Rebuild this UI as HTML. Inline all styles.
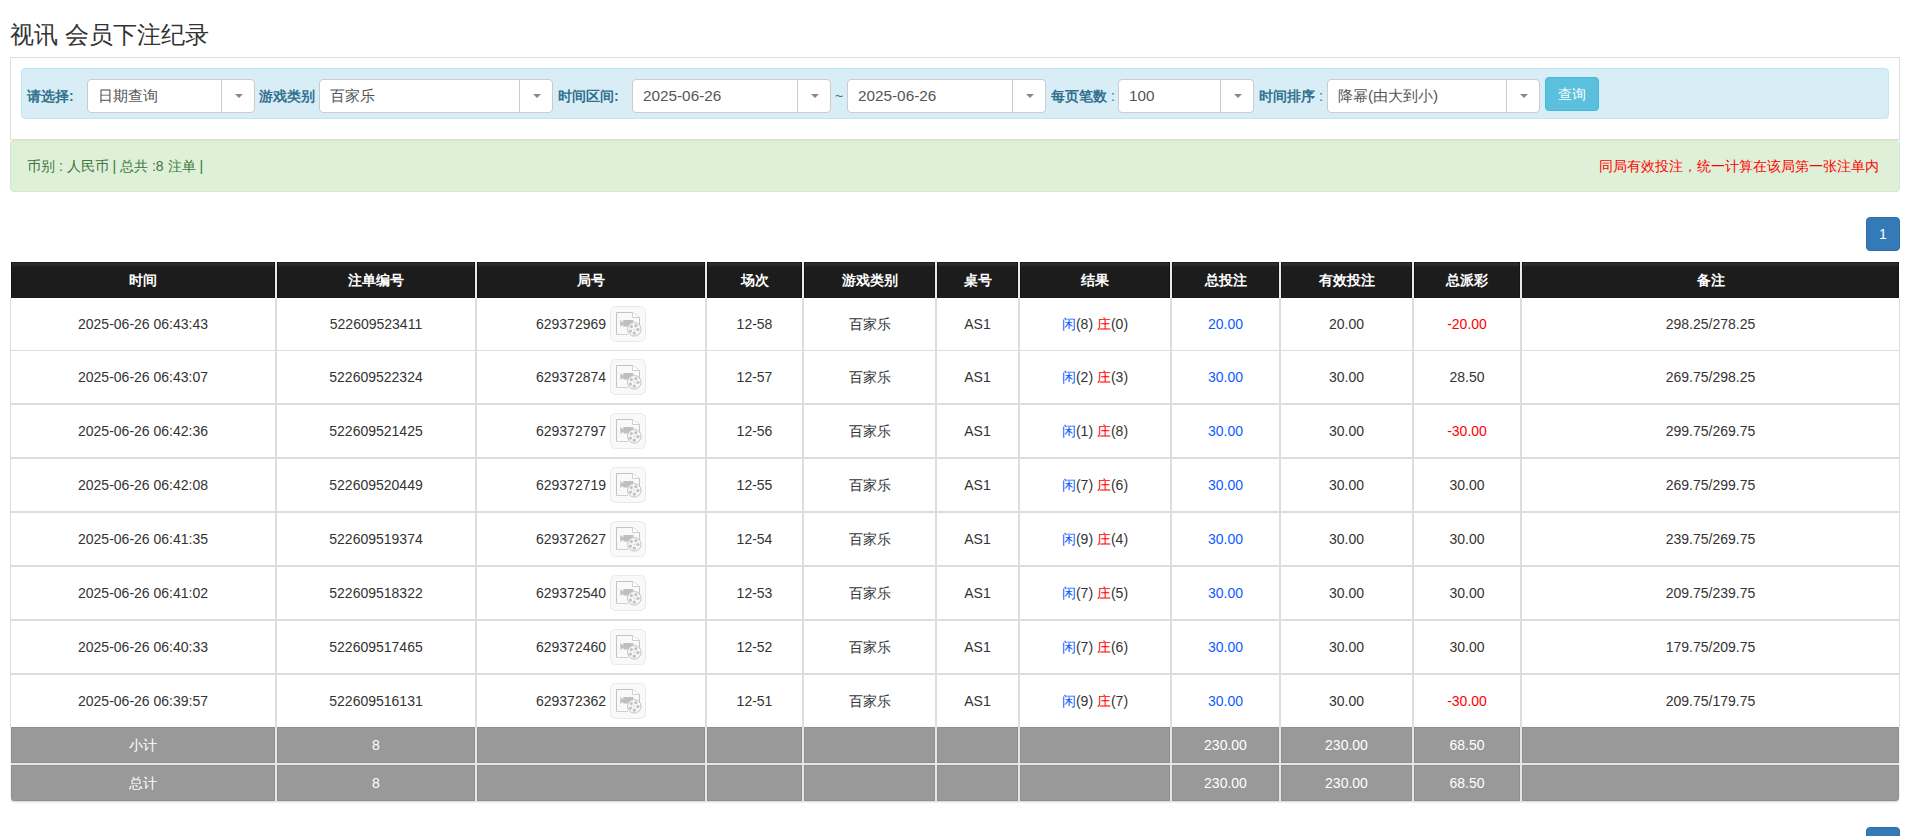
<!DOCTYPE html><html><head><meta charset="utf-8"><style>
*{box-sizing:border-box;margin:0;padding:0}
html,body{width:1910px;height:836px;overflow:hidden;background:#fff}
body{position:relative;font-family:"Liberation Sans", sans-serif;font-size:14px;color:#333;line-height:20px}
.a{position:absolute}
.title{left:10px;top:20px;font-size:24px;line-height:30px;color:#333;white-space:nowrap}
.panel{left:10px;top:57px;width:1890px;height:83px;border:1px solid #ddd}
.info{left:21px;top:68px;width:1868px;height:51px;background:#d9edf7;border:1px solid #bce8f1;border-radius:4px}
.lbl{top:86px;font-weight:bold;color:#31708f;white-space:nowrap;line-height:20px}
.sel{top:79px;height:34px;background:#fff;border:1px solid #ccc;border-radius:4px}
.sel .t{position:absolute;left:10px;top:6px;color:#555;white-space:nowrap;line-height:20px;font-size:15.3px}
.sel .d{position:absolute;right:32px;top:0;width:1px;height:32px;background:#ccc}
.sel .ar{position:absolute;right:11px;top:14px;width:0;height:0;border-left:4px solid transparent;border-right:4px solid transparent;border-top:4px solid #888}
.btn{left:1545px;top:77px;width:54px;height:34px;background:#5bc0de;border:1px solid #46b8da;border-radius:4px;color:#fff;text-align:center;line-height:32px}
.ok{left:10px;top:140px;width:1890px;height:52px;background:#dff0d8;border:1px solid #d6e9c6;border-radius:4px}
.okl{left:27px;top:156px;color:#3c763d;white-space:nowrap}
.okr{right:31px;top:156px;color:#f00;white-space:nowrap}
.pg{left:1866px;width:34px;height:34px;background:#337ab7;border:1px solid #2e6da4;border-radius:4px;color:#fff;text-align:center;line-height:32px;font-size:14px}
.c{position:absolute;display:flex;align-items:center;justify-content:center;white-space:nowrap}
.hd{background:linear-gradient(#1e1e1e 0,#1e1e1e 1px,#2c2c2c 1px,#2c2c2c 3px,#1c1c1c 5px,#1c1c1c 100%);color:#fff;font-weight:bold}
.ft{background:#999;color:#fff}
.b{color:#0d5bff} .r{color:#f00}
.ic{display:inline-block;width:36px;height:36px;margin-left:4px;vertical-align:middle} .n1{position:relative;top:1px}
</style></head><body>
<div class="a title">视讯 会员下注纪录</div>
<div class="a panel"></div>
<div class="a info"></div>
<div class="a lbl" style="left:27px">请选择:</div>
<div class="a lbl" style="left:259px">游戏类别</div>
<div class="a lbl" style="left:558px">时间区间:</div>
<div class="a lbl" style="left:1051px">每页笔数<span style="font-weight:normal"> :</span></div>
<div class="a lbl" style="left:1259px">时间排序<span style="font-weight:normal"> :</span></div>
<div class="a lbl" style="left:835px;font-weight:normal">~</div>
<div class="a sel" style="left:87px;width:168px"><span class="t">日期查询</span><span class="d"></span><span class="ar"></span></div>
<div class="a sel" style="left:319px;width:234px"><span class="t">百家乐</span><span class="d"></span><span class="ar"></span></div>
<div class="a sel" style="left:632px;width:199px"><span class="t">2025-06-26</span><span class="d"></span><span class="ar"></span></div>
<div class="a sel" style="left:847px;width:199px"><span class="t">2025-06-26</span><span class="d"></span><span class="ar"></span></div>
<div class="a sel" style="left:1118px;width:136px"><span class="t">100</span><span class="d"></span><span class="ar"></span></div>
<div class="a sel" style="left:1327px;width:213px"><span class="t">降幂(由大到小)</span><span class="d"></span><span class="ar"></span></div>
<div class="a btn">查询</div>
<div class="a ok"></div>
<div class="a okl">币别 : 人民币 | 总共 :8 注单 |</div>
<div class="a okr">同局有效投注，统一计算在该局第一张注单内</div>
<div class="a pg" style="top:217px">1</div>
<div class="a pg" style="top:827px">1</div>
<div class="a" style="left:10px;top:298px;width:1px;height:429px;background:#ddd"></div>
<div class="a" style="left:1899px;top:298px;width:1px;height:429px;background:#ddd"></div>
<div class="a" style="left:275px;top:298px;width:2px;height:429px;background:#ddd"></div>
<div class="a" style="left:475px;top:298px;width:2px;height:429px;background:#ddd"></div>
<div class="a" style="left:705px;top:298px;width:2px;height:429px;background:#ddd"></div>
<div class="a" style="left:802px;top:298px;width:2px;height:429px;background:#ddd"></div>
<div class="a" style="left:935px;top:298px;width:2px;height:429px;background:#ddd"></div>
<div class="a" style="left:1018px;top:298px;width:2px;height:429px;background:#ddd"></div>
<div class="a" style="left:1170px;top:298px;width:2px;height:429px;background:#ddd"></div>
<div class="a" style="left:1279px;top:298px;width:2px;height:429px;background:#ddd"></div>
<div class="a" style="left:1412px;top:298px;width:2px;height:429px;background:#ddd"></div>
<div class="a" style="left:1520px;top:298px;width:2px;height:429px;background:#ddd"></div>
<div class="a" style="left:10px;top:350px;width:1890px;height:1px;background:#ddd"></div>
<div class="a" style="left:10px;top:403px;width:1890px;height:2px;background:#ddd"></div>
<div class="a" style="left:10px;top:457px;width:1890px;height:2px;background:#ddd"></div>
<div class="a" style="left:10px;top:511px;width:1890px;height:2px;background:#ddd"></div>
<div class="a" style="left:10px;top:565px;width:1890px;height:2px;background:#ddd"></div>
<div class="a" style="left:10px;top:619px;width:1890px;height:2px;background:#ddd"></div>
<div class="a" style="left:10px;top:673px;width:1890px;height:2px;background:#ddd"></div>
<div class="a hd" style="left:11px;top:262px;width:1888px;height:36px;border-left:1px solid #141414;border-right:1px solid #141414"></div>
<div class="a" style="left:274px;top:262px;width:4px;height:36px;background:#141414;border-left:1px solid #141414;border-right:1px solid #141414"></div>
<div class="a" style="left:275px;top:262px;width:2px;height:36px;background:#eaeaea"></div>
<div class="a" style="left:474px;top:262px;width:4px;height:36px;background:#141414;border-left:1px solid #141414;border-right:1px solid #141414"></div>
<div class="a" style="left:475px;top:262px;width:2px;height:36px;background:#eaeaea"></div>
<div class="a" style="left:704px;top:262px;width:4px;height:36px;background:#141414;border-left:1px solid #141414;border-right:1px solid #141414"></div>
<div class="a" style="left:705px;top:262px;width:2px;height:36px;background:#eaeaea"></div>
<div class="a" style="left:801px;top:262px;width:4px;height:36px;background:#141414;border-left:1px solid #141414;border-right:1px solid #141414"></div>
<div class="a" style="left:802px;top:262px;width:2px;height:36px;background:#eaeaea"></div>
<div class="a" style="left:934px;top:262px;width:4px;height:36px;background:#141414;border-left:1px solid #141414;border-right:1px solid #141414"></div>
<div class="a" style="left:935px;top:262px;width:2px;height:36px;background:#eaeaea"></div>
<div class="a" style="left:1017px;top:262px;width:4px;height:36px;background:#141414;border-left:1px solid #141414;border-right:1px solid #141414"></div>
<div class="a" style="left:1018px;top:262px;width:2px;height:36px;background:#eaeaea"></div>
<div class="a" style="left:1169px;top:262px;width:4px;height:36px;background:#141414;border-left:1px solid #141414;border-right:1px solid #141414"></div>
<div class="a" style="left:1170px;top:262px;width:2px;height:36px;background:#eaeaea"></div>
<div class="a" style="left:1278px;top:262px;width:4px;height:36px;background:#141414;border-left:1px solid #141414;border-right:1px solid #141414"></div>
<div class="a" style="left:1279px;top:262px;width:2px;height:36px;background:#eaeaea"></div>
<div class="a" style="left:1411px;top:262px;width:4px;height:36px;background:#141414;border-left:1px solid #141414;border-right:1px solid #141414"></div>
<div class="a" style="left:1412px;top:262px;width:2px;height:36px;background:#eaeaea"></div>
<div class="a" style="left:1519px;top:262px;width:4px;height:36px;background:#141414;border-left:1px solid #141414;border-right:1px solid #141414"></div>
<div class="a" style="left:1520px;top:262px;width:2px;height:36px;background:#eaeaea"></div>
<div class="c" style="left:11px;top:262px;width:264px;height:36px;color:#fff;font-weight:bold">时间</div>
<div class="c" style="left:277px;top:262px;width:198px;height:36px;color:#fff;font-weight:bold">注单编号</div>
<div class="c" style="left:477px;top:262px;width:228px;height:36px;color:#fff;font-weight:bold">局号</div>
<div class="c" style="left:707px;top:262px;width:95px;height:36px;color:#fff;font-weight:bold">场次</div>
<div class="c" style="left:804px;top:262px;width:131px;height:36px;color:#fff;font-weight:bold">游戏类别</div>
<div class="c" style="left:937px;top:262px;width:81px;height:36px;color:#fff;font-weight:bold">桌号</div>
<div class="c" style="left:1020px;top:262px;width:150px;height:36px;color:#fff;font-weight:bold">结果</div>
<div class="c" style="left:1172px;top:262px;width:107px;height:36px;color:#fff;font-weight:bold">总投注</div>
<div class="c" style="left:1281px;top:262px;width:131px;height:36px;color:#fff;font-weight:bold">有效投注</div>
<div class="c" style="left:1414px;top:262px;width:106px;height:36px;color:#fff;font-weight:bold">总派彩</div>
<div class="c" style="left:1522px;top:262px;width:377px;height:36px;color:#fff;font-weight:bold">备注</div>
<div class="c" style="left:11px;top:298px;width:264px;height:52px"><span>2025-06-26 06:43:43</span></div>
<div class="c" style="left:277px;top:298px;width:198px;height:52px"><span>522609523411</span></div>
<div class="c" style="left:477px;top:298px;width:228px;height:52px"><span><span class="n1">629372969</span><svg class="ic" viewBox="-1 0 36 36"><rect x="-0.5" y="0.5" width="35" height="35" rx="5" fill="#f9f9f9" stroke="#e9e9e9"/><path d="M5.5 28.5V6.5H21.5L28.5 11.5V22" fill="none" stroke="#c4c4c4"/><path d="M5.5 28.5H17" fill="none" stroke="#cfcfcf"/><path d="M21.5 6.5V11.5H28.5" fill="#fff" stroke="#cfcfcf"/><path d="M9.3 14 L12.3 16.5 V14 H22.3 V20.6 H12.3 V18.5 L9.3 21 Z" fill="#bfbfbf"/><circle cx="23.3" cy="23.3" r="6.8" fill="#f7f7f7" stroke="#c4c4c4"/><circle cx="20.4" cy="20.6" r="1.6" fill="#c2c2c2"/><circle cx="24.8" cy="19.7" r="1.6" fill="#c2c2c2"/><circle cx="26.9" cy="23.6" r="1.6" fill="#c2c2c2"/><circle cx="23.3" cy="27.2" r="1.6" fill="#c2c2c2"/><circle cx="19.4" cy="25.1" r="1.6" fill="#c2c2c2"/><circle cx="23.3" cy="23.5" r="0.7" fill="#c8c8c8"/></svg></span></div>
<div class="c" style="left:707px;top:298px;width:95px;height:52px"><span>12-58</span></div>
<div class="c" style="left:804px;top:298px;width:131px;height:52px"><span>百家乐</span></div>
<div class="c" style="left:937px;top:298px;width:81px;height:52px"><span>AS1</span></div>
<div class="c" style="left:1020px;top:298px;width:150px;height:52px"><span><span class="b">闲</span>(8) <span class="r">庄</span>(0)</span></div>
<div class="c" style="left:1172px;top:298px;width:107px;height:52px"><span><span class="b">20.00</span></span></div>
<div class="c" style="left:1281px;top:298px;width:131px;height:52px"><span>20.00</span></div>
<div class="c" style="left:1414px;top:298px;width:106px;height:52px"><span><span class="r">-20.00</span></span></div>
<div class="c" style="left:1522px;top:298px;width:377px;height:52px"><span>298.25/278.25</span></div>
<div class="c" style="left:11px;top:351px;width:264px;height:52px"><span>2025-06-26 06:43:07</span></div>
<div class="c" style="left:277px;top:351px;width:198px;height:52px"><span>522609522324</span></div>
<div class="c" style="left:477px;top:351px;width:228px;height:52px"><span><span class="n1">629372874</span><svg class="ic" viewBox="-1 0 36 36"><rect x="-0.5" y="0.5" width="35" height="35" rx="5" fill="#f9f9f9" stroke="#e9e9e9"/><path d="M5.5 28.5V6.5H21.5L28.5 11.5V22" fill="none" stroke="#c4c4c4"/><path d="M5.5 28.5H17" fill="none" stroke="#cfcfcf"/><path d="M21.5 6.5V11.5H28.5" fill="#fff" stroke="#cfcfcf"/><path d="M9.3 14 L12.3 16.5 V14 H22.3 V20.6 H12.3 V18.5 L9.3 21 Z" fill="#bfbfbf"/><circle cx="23.3" cy="23.3" r="6.8" fill="#f7f7f7" stroke="#c4c4c4"/><circle cx="20.4" cy="20.6" r="1.6" fill="#c2c2c2"/><circle cx="24.8" cy="19.7" r="1.6" fill="#c2c2c2"/><circle cx="26.9" cy="23.6" r="1.6" fill="#c2c2c2"/><circle cx="23.3" cy="27.2" r="1.6" fill="#c2c2c2"/><circle cx="19.4" cy="25.1" r="1.6" fill="#c2c2c2"/><circle cx="23.3" cy="23.5" r="0.7" fill="#c8c8c8"/></svg></span></div>
<div class="c" style="left:707px;top:351px;width:95px;height:52px"><span>12-57</span></div>
<div class="c" style="left:804px;top:351px;width:131px;height:52px"><span>百家乐</span></div>
<div class="c" style="left:937px;top:351px;width:81px;height:52px"><span>AS1</span></div>
<div class="c" style="left:1020px;top:351px;width:150px;height:52px"><span><span class="b">闲</span>(2) <span class="r">庄</span>(3)</span></div>
<div class="c" style="left:1172px;top:351px;width:107px;height:52px"><span><span class="b">30.00</span></span></div>
<div class="c" style="left:1281px;top:351px;width:131px;height:52px"><span>30.00</span></div>
<div class="c" style="left:1414px;top:351px;width:106px;height:52px"><span>28.50</span></div>
<div class="c" style="left:1522px;top:351px;width:377px;height:52px"><span>269.75/298.25</span></div>
<div class="c" style="left:11px;top:405px;width:264px;height:52px"><span>2025-06-26 06:42:36</span></div>
<div class="c" style="left:277px;top:405px;width:198px;height:52px"><span>522609521425</span></div>
<div class="c" style="left:477px;top:405px;width:228px;height:52px"><span><span class="n1">629372797</span><svg class="ic" viewBox="-1 0 36 36"><rect x="-0.5" y="0.5" width="35" height="35" rx="5" fill="#f9f9f9" stroke="#e9e9e9"/><path d="M5.5 28.5V6.5H21.5L28.5 11.5V22" fill="none" stroke="#c4c4c4"/><path d="M5.5 28.5H17" fill="none" stroke="#cfcfcf"/><path d="M21.5 6.5V11.5H28.5" fill="#fff" stroke="#cfcfcf"/><path d="M9.3 14 L12.3 16.5 V14 H22.3 V20.6 H12.3 V18.5 L9.3 21 Z" fill="#bfbfbf"/><circle cx="23.3" cy="23.3" r="6.8" fill="#f7f7f7" stroke="#c4c4c4"/><circle cx="20.4" cy="20.6" r="1.6" fill="#c2c2c2"/><circle cx="24.8" cy="19.7" r="1.6" fill="#c2c2c2"/><circle cx="26.9" cy="23.6" r="1.6" fill="#c2c2c2"/><circle cx="23.3" cy="27.2" r="1.6" fill="#c2c2c2"/><circle cx="19.4" cy="25.1" r="1.6" fill="#c2c2c2"/><circle cx="23.3" cy="23.5" r="0.7" fill="#c8c8c8"/></svg></span></div>
<div class="c" style="left:707px;top:405px;width:95px;height:52px"><span>12-56</span></div>
<div class="c" style="left:804px;top:405px;width:131px;height:52px"><span>百家乐</span></div>
<div class="c" style="left:937px;top:405px;width:81px;height:52px"><span>AS1</span></div>
<div class="c" style="left:1020px;top:405px;width:150px;height:52px"><span><span class="b">闲</span>(1) <span class="r">庄</span>(8)</span></div>
<div class="c" style="left:1172px;top:405px;width:107px;height:52px"><span><span class="b">30.00</span></span></div>
<div class="c" style="left:1281px;top:405px;width:131px;height:52px"><span>30.00</span></div>
<div class="c" style="left:1414px;top:405px;width:106px;height:52px"><span><span class="r">-30.00</span></span></div>
<div class="c" style="left:1522px;top:405px;width:377px;height:52px"><span>299.75/269.75</span></div>
<div class="c" style="left:11px;top:459px;width:264px;height:52px"><span>2025-06-26 06:42:08</span></div>
<div class="c" style="left:277px;top:459px;width:198px;height:52px"><span>522609520449</span></div>
<div class="c" style="left:477px;top:459px;width:228px;height:52px"><span><span class="n1">629372719</span><svg class="ic" viewBox="-1 0 36 36"><rect x="-0.5" y="0.5" width="35" height="35" rx="5" fill="#f9f9f9" stroke="#e9e9e9"/><path d="M5.5 28.5V6.5H21.5L28.5 11.5V22" fill="none" stroke="#c4c4c4"/><path d="M5.5 28.5H17" fill="none" stroke="#cfcfcf"/><path d="M21.5 6.5V11.5H28.5" fill="#fff" stroke="#cfcfcf"/><path d="M9.3 14 L12.3 16.5 V14 H22.3 V20.6 H12.3 V18.5 L9.3 21 Z" fill="#bfbfbf"/><circle cx="23.3" cy="23.3" r="6.8" fill="#f7f7f7" stroke="#c4c4c4"/><circle cx="20.4" cy="20.6" r="1.6" fill="#c2c2c2"/><circle cx="24.8" cy="19.7" r="1.6" fill="#c2c2c2"/><circle cx="26.9" cy="23.6" r="1.6" fill="#c2c2c2"/><circle cx="23.3" cy="27.2" r="1.6" fill="#c2c2c2"/><circle cx="19.4" cy="25.1" r="1.6" fill="#c2c2c2"/><circle cx="23.3" cy="23.5" r="0.7" fill="#c8c8c8"/></svg></span></div>
<div class="c" style="left:707px;top:459px;width:95px;height:52px"><span>12-55</span></div>
<div class="c" style="left:804px;top:459px;width:131px;height:52px"><span>百家乐</span></div>
<div class="c" style="left:937px;top:459px;width:81px;height:52px"><span>AS1</span></div>
<div class="c" style="left:1020px;top:459px;width:150px;height:52px"><span><span class="b">闲</span>(7) <span class="r">庄</span>(6)</span></div>
<div class="c" style="left:1172px;top:459px;width:107px;height:52px"><span><span class="b">30.00</span></span></div>
<div class="c" style="left:1281px;top:459px;width:131px;height:52px"><span>30.00</span></div>
<div class="c" style="left:1414px;top:459px;width:106px;height:52px"><span>30.00</span></div>
<div class="c" style="left:1522px;top:459px;width:377px;height:52px"><span>269.75/299.75</span></div>
<div class="c" style="left:11px;top:513px;width:264px;height:52px"><span>2025-06-26 06:41:35</span></div>
<div class="c" style="left:277px;top:513px;width:198px;height:52px"><span>522609519374</span></div>
<div class="c" style="left:477px;top:513px;width:228px;height:52px"><span><span class="n1">629372627</span><svg class="ic" viewBox="-1 0 36 36"><rect x="-0.5" y="0.5" width="35" height="35" rx="5" fill="#f9f9f9" stroke="#e9e9e9"/><path d="M5.5 28.5V6.5H21.5L28.5 11.5V22" fill="none" stroke="#c4c4c4"/><path d="M5.5 28.5H17" fill="none" stroke="#cfcfcf"/><path d="M21.5 6.5V11.5H28.5" fill="#fff" stroke="#cfcfcf"/><path d="M9.3 14 L12.3 16.5 V14 H22.3 V20.6 H12.3 V18.5 L9.3 21 Z" fill="#bfbfbf"/><circle cx="23.3" cy="23.3" r="6.8" fill="#f7f7f7" stroke="#c4c4c4"/><circle cx="20.4" cy="20.6" r="1.6" fill="#c2c2c2"/><circle cx="24.8" cy="19.7" r="1.6" fill="#c2c2c2"/><circle cx="26.9" cy="23.6" r="1.6" fill="#c2c2c2"/><circle cx="23.3" cy="27.2" r="1.6" fill="#c2c2c2"/><circle cx="19.4" cy="25.1" r="1.6" fill="#c2c2c2"/><circle cx="23.3" cy="23.5" r="0.7" fill="#c8c8c8"/></svg></span></div>
<div class="c" style="left:707px;top:513px;width:95px;height:52px"><span>12-54</span></div>
<div class="c" style="left:804px;top:513px;width:131px;height:52px"><span>百家乐</span></div>
<div class="c" style="left:937px;top:513px;width:81px;height:52px"><span>AS1</span></div>
<div class="c" style="left:1020px;top:513px;width:150px;height:52px"><span><span class="b">闲</span>(9) <span class="r">庄</span>(4)</span></div>
<div class="c" style="left:1172px;top:513px;width:107px;height:52px"><span><span class="b">30.00</span></span></div>
<div class="c" style="left:1281px;top:513px;width:131px;height:52px"><span>30.00</span></div>
<div class="c" style="left:1414px;top:513px;width:106px;height:52px"><span>30.00</span></div>
<div class="c" style="left:1522px;top:513px;width:377px;height:52px"><span>239.75/269.75</span></div>
<div class="c" style="left:11px;top:567px;width:264px;height:52px"><span>2025-06-26 06:41:02</span></div>
<div class="c" style="left:277px;top:567px;width:198px;height:52px"><span>522609518322</span></div>
<div class="c" style="left:477px;top:567px;width:228px;height:52px"><span><span class="n1">629372540</span><svg class="ic" viewBox="-1 0 36 36"><rect x="-0.5" y="0.5" width="35" height="35" rx="5" fill="#f9f9f9" stroke="#e9e9e9"/><path d="M5.5 28.5V6.5H21.5L28.5 11.5V22" fill="none" stroke="#c4c4c4"/><path d="M5.5 28.5H17" fill="none" stroke="#cfcfcf"/><path d="M21.5 6.5V11.5H28.5" fill="#fff" stroke="#cfcfcf"/><path d="M9.3 14 L12.3 16.5 V14 H22.3 V20.6 H12.3 V18.5 L9.3 21 Z" fill="#bfbfbf"/><circle cx="23.3" cy="23.3" r="6.8" fill="#f7f7f7" stroke="#c4c4c4"/><circle cx="20.4" cy="20.6" r="1.6" fill="#c2c2c2"/><circle cx="24.8" cy="19.7" r="1.6" fill="#c2c2c2"/><circle cx="26.9" cy="23.6" r="1.6" fill="#c2c2c2"/><circle cx="23.3" cy="27.2" r="1.6" fill="#c2c2c2"/><circle cx="19.4" cy="25.1" r="1.6" fill="#c2c2c2"/><circle cx="23.3" cy="23.5" r="0.7" fill="#c8c8c8"/></svg></span></div>
<div class="c" style="left:707px;top:567px;width:95px;height:52px"><span>12-53</span></div>
<div class="c" style="left:804px;top:567px;width:131px;height:52px"><span>百家乐</span></div>
<div class="c" style="left:937px;top:567px;width:81px;height:52px"><span>AS1</span></div>
<div class="c" style="left:1020px;top:567px;width:150px;height:52px"><span><span class="b">闲</span>(7) <span class="r">庄</span>(5)</span></div>
<div class="c" style="left:1172px;top:567px;width:107px;height:52px"><span><span class="b">30.00</span></span></div>
<div class="c" style="left:1281px;top:567px;width:131px;height:52px"><span>30.00</span></div>
<div class="c" style="left:1414px;top:567px;width:106px;height:52px"><span>30.00</span></div>
<div class="c" style="left:1522px;top:567px;width:377px;height:52px"><span>209.75/239.75</span></div>
<div class="c" style="left:11px;top:621px;width:264px;height:52px"><span>2025-06-26 06:40:33</span></div>
<div class="c" style="left:277px;top:621px;width:198px;height:52px"><span>522609517465</span></div>
<div class="c" style="left:477px;top:621px;width:228px;height:52px"><span><span class="n1">629372460</span><svg class="ic" viewBox="-1 0 36 36"><rect x="-0.5" y="0.5" width="35" height="35" rx="5" fill="#f9f9f9" stroke="#e9e9e9"/><path d="M5.5 28.5V6.5H21.5L28.5 11.5V22" fill="none" stroke="#c4c4c4"/><path d="M5.5 28.5H17" fill="none" stroke="#cfcfcf"/><path d="M21.5 6.5V11.5H28.5" fill="#fff" stroke="#cfcfcf"/><path d="M9.3 14 L12.3 16.5 V14 H22.3 V20.6 H12.3 V18.5 L9.3 21 Z" fill="#bfbfbf"/><circle cx="23.3" cy="23.3" r="6.8" fill="#f7f7f7" stroke="#c4c4c4"/><circle cx="20.4" cy="20.6" r="1.6" fill="#c2c2c2"/><circle cx="24.8" cy="19.7" r="1.6" fill="#c2c2c2"/><circle cx="26.9" cy="23.6" r="1.6" fill="#c2c2c2"/><circle cx="23.3" cy="27.2" r="1.6" fill="#c2c2c2"/><circle cx="19.4" cy="25.1" r="1.6" fill="#c2c2c2"/><circle cx="23.3" cy="23.5" r="0.7" fill="#c8c8c8"/></svg></span></div>
<div class="c" style="left:707px;top:621px;width:95px;height:52px"><span>12-52</span></div>
<div class="c" style="left:804px;top:621px;width:131px;height:52px"><span>百家乐</span></div>
<div class="c" style="left:937px;top:621px;width:81px;height:52px"><span>AS1</span></div>
<div class="c" style="left:1020px;top:621px;width:150px;height:52px"><span><span class="b">闲</span>(7) <span class="r">庄</span>(6)</span></div>
<div class="c" style="left:1172px;top:621px;width:107px;height:52px"><span><span class="b">30.00</span></span></div>
<div class="c" style="left:1281px;top:621px;width:131px;height:52px"><span>30.00</span></div>
<div class="c" style="left:1414px;top:621px;width:106px;height:52px"><span>30.00</span></div>
<div class="c" style="left:1522px;top:621px;width:377px;height:52px"><span>179.75/209.75</span></div>
<div class="c" style="left:11px;top:675px;width:264px;height:52px"><span>2025-06-26 06:39:57</span></div>
<div class="c" style="left:277px;top:675px;width:198px;height:52px"><span>522609516131</span></div>
<div class="c" style="left:477px;top:675px;width:228px;height:52px"><span><span class="n1">629372362</span><svg class="ic" viewBox="-1 0 36 36"><rect x="-0.5" y="0.5" width="35" height="35" rx="5" fill="#f9f9f9" stroke="#e9e9e9"/><path d="M5.5 28.5V6.5H21.5L28.5 11.5V22" fill="none" stroke="#c4c4c4"/><path d="M5.5 28.5H17" fill="none" stroke="#cfcfcf"/><path d="M21.5 6.5V11.5H28.5" fill="#fff" stroke="#cfcfcf"/><path d="M9.3 14 L12.3 16.5 V14 H22.3 V20.6 H12.3 V18.5 L9.3 21 Z" fill="#bfbfbf"/><circle cx="23.3" cy="23.3" r="6.8" fill="#f7f7f7" stroke="#c4c4c4"/><circle cx="20.4" cy="20.6" r="1.6" fill="#c2c2c2"/><circle cx="24.8" cy="19.7" r="1.6" fill="#c2c2c2"/><circle cx="26.9" cy="23.6" r="1.6" fill="#c2c2c2"/><circle cx="23.3" cy="27.2" r="1.6" fill="#c2c2c2"/><circle cx="19.4" cy="25.1" r="1.6" fill="#c2c2c2"/><circle cx="23.3" cy="23.5" r="0.7" fill="#c8c8c8"/></svg></span></div>
<div class="c" style="left:707px;top:675px;width:95px;height:52px"><span>12-51</span></div>
<div class="c" style="left:804px;top:675px;width:131px;height:52px"><span>百家乐</span></div>
<div class="c" style="left:937px;top:675px;width:81px;height:52px"><span>AS1</span></div>
<div class="c" style="left:1020px;top:675px;width:150px;height:52px"><span><span class="b">闲</span>(9) <span class="r">庄</span>(7)</span></div>
<div class="c" style="left:1172px;top:675px;width:107px;height:52px"><span><span class="b">30.00</span></span></div>
<div class="c" style="left:1281px;top:675px;width:131px;height:52px"><span>30.00</span></div>
<div class="c" style="left:1414px;top:675px;width:106px;height:52px"><span><span class="r">-30.00</span></span></div>
<div class="c" style="left:1522px;top:675px;width:377px;height:52px"><span>209.75/179.75</span></div>
<div class="a" style="left:11px;top:727px;width:1888px;height:74px;background:#e6e6e6;border-radius:0 0 3px 3px;box-shadow:0 1px 2px rgba(0,0,0,.18)"></div>
<div class="c" style="left:11px;top:727px;width:264px;height:36px;color:#fff;background:#999;border:1px solid #8f8f8f;">小计</div>
<div class="c" style="left:277px;top:727px;width:198px;height:36px;color:#fff;background:#999;border:1px solid #8f8f8f;">8</div>
<div class="c" style="left:477px;top:727px;width:228px;height:36px;color:#fff;background:#999;border:1px solid #8f8f8f;"></div>
<div class="c" style="left:707px;top:727px;width:95px;height:36px;color:#fff;background:#999;border:1px solid #8f8f8f;"></div>
<div class="c" style="left:804px;top:727px;width:131px;height:36px;color:#fff;background:#999;border:1px solid #8f8f8f;"></div>
<div class="c" style="left:937px;top:727px;width:81px;height:36px;color:#fff;background:#999;border:1px solid #8f8f8f;"></div>
<div class="c" style="left:1020px;top:727px;width:150px;height:36px;color:#fff;background:#999;border:1px solid #8f8f8f;"></div>
<div class="c" style="left:1172px;top:727px;width:107px;height:36px;color:#fff;background:#999;border:1px solid #8f8f8f;">230.00</div>
<div class="c" style="left:1281px;top:727px;width:131px;height:36px;color:#fff;background:#999;border:1px solid #8f8f8f;">230.00</div>
<div class="c" style="left:1414px;top:727px;width:106px;height:36px;color:#fff;background:#999;border:1px solid #8f8f8f;">68.50</div>
<div class="c" style="left:1522px;top:727px;width:377px;height:36px;color:#fff;background:#999;border:1px solid #8f8f8f;"></div>
<div class="c" style="left:11px;top:765px;width:264px;height:36px;color:#fff;background:#999;border:1px solid #8f8f8f;border-bottom-left-radius:3px;">总计</div>
<div class="c" style="left:277px;top:765px;width:198px;height:36px;color:#fff;background:#999;border:1px solid #8f8f8f;">8</div>
<div class="c" style="left:477px;top:765px;width:228px;height:36px;color:#fff;background:#999;border:1px solid #8f8f8f;"></div>
<div class="c" style="left:707px;top:765px;width:95px;height:36px;color:#fff;background:#999;border:1px solid #8f8f8f;"></div>
<div class="c" style="left:804px;top:765px;width:131px;height:36px;color:#fff;background:#999;border:1px solid #8f8f8f;"></div>
<div class="c" style="left:937px;top:765px;width:81px;height:36px;color:#fff;background:#999;border:1px solid #8f8f8f;"></div>
<div class="c" style="left:1020px;top:765px;width:150px;height:36px;color:#fff;background:#999;border:1px solid #8f8f8f;"></div>
<div class="c" style="left:1172px;top:765px;width:107px;height:36px;color:#fff;background:#999;border:1px solid #8f8f8f;">230.00</div>
<div class="c" style="left:1281px;top:765px;width:131px;height:36px;color:#fff;background:#999;border:1px solid #8f8f8f;">230.00</div>
<div class="c" style="left:1414px;top:765px;width:106px;height:36px;color:#fff;background:#999;border:1px solid #8f8f8f;">68.50</div>
<div class="c" style="left:1522px;top:765px;width:377px;height:36px;color:#fff;background:#999;border:1px solid #8f8f8f;border-bottom-right-radius:3px;"></div>
</body></html>
